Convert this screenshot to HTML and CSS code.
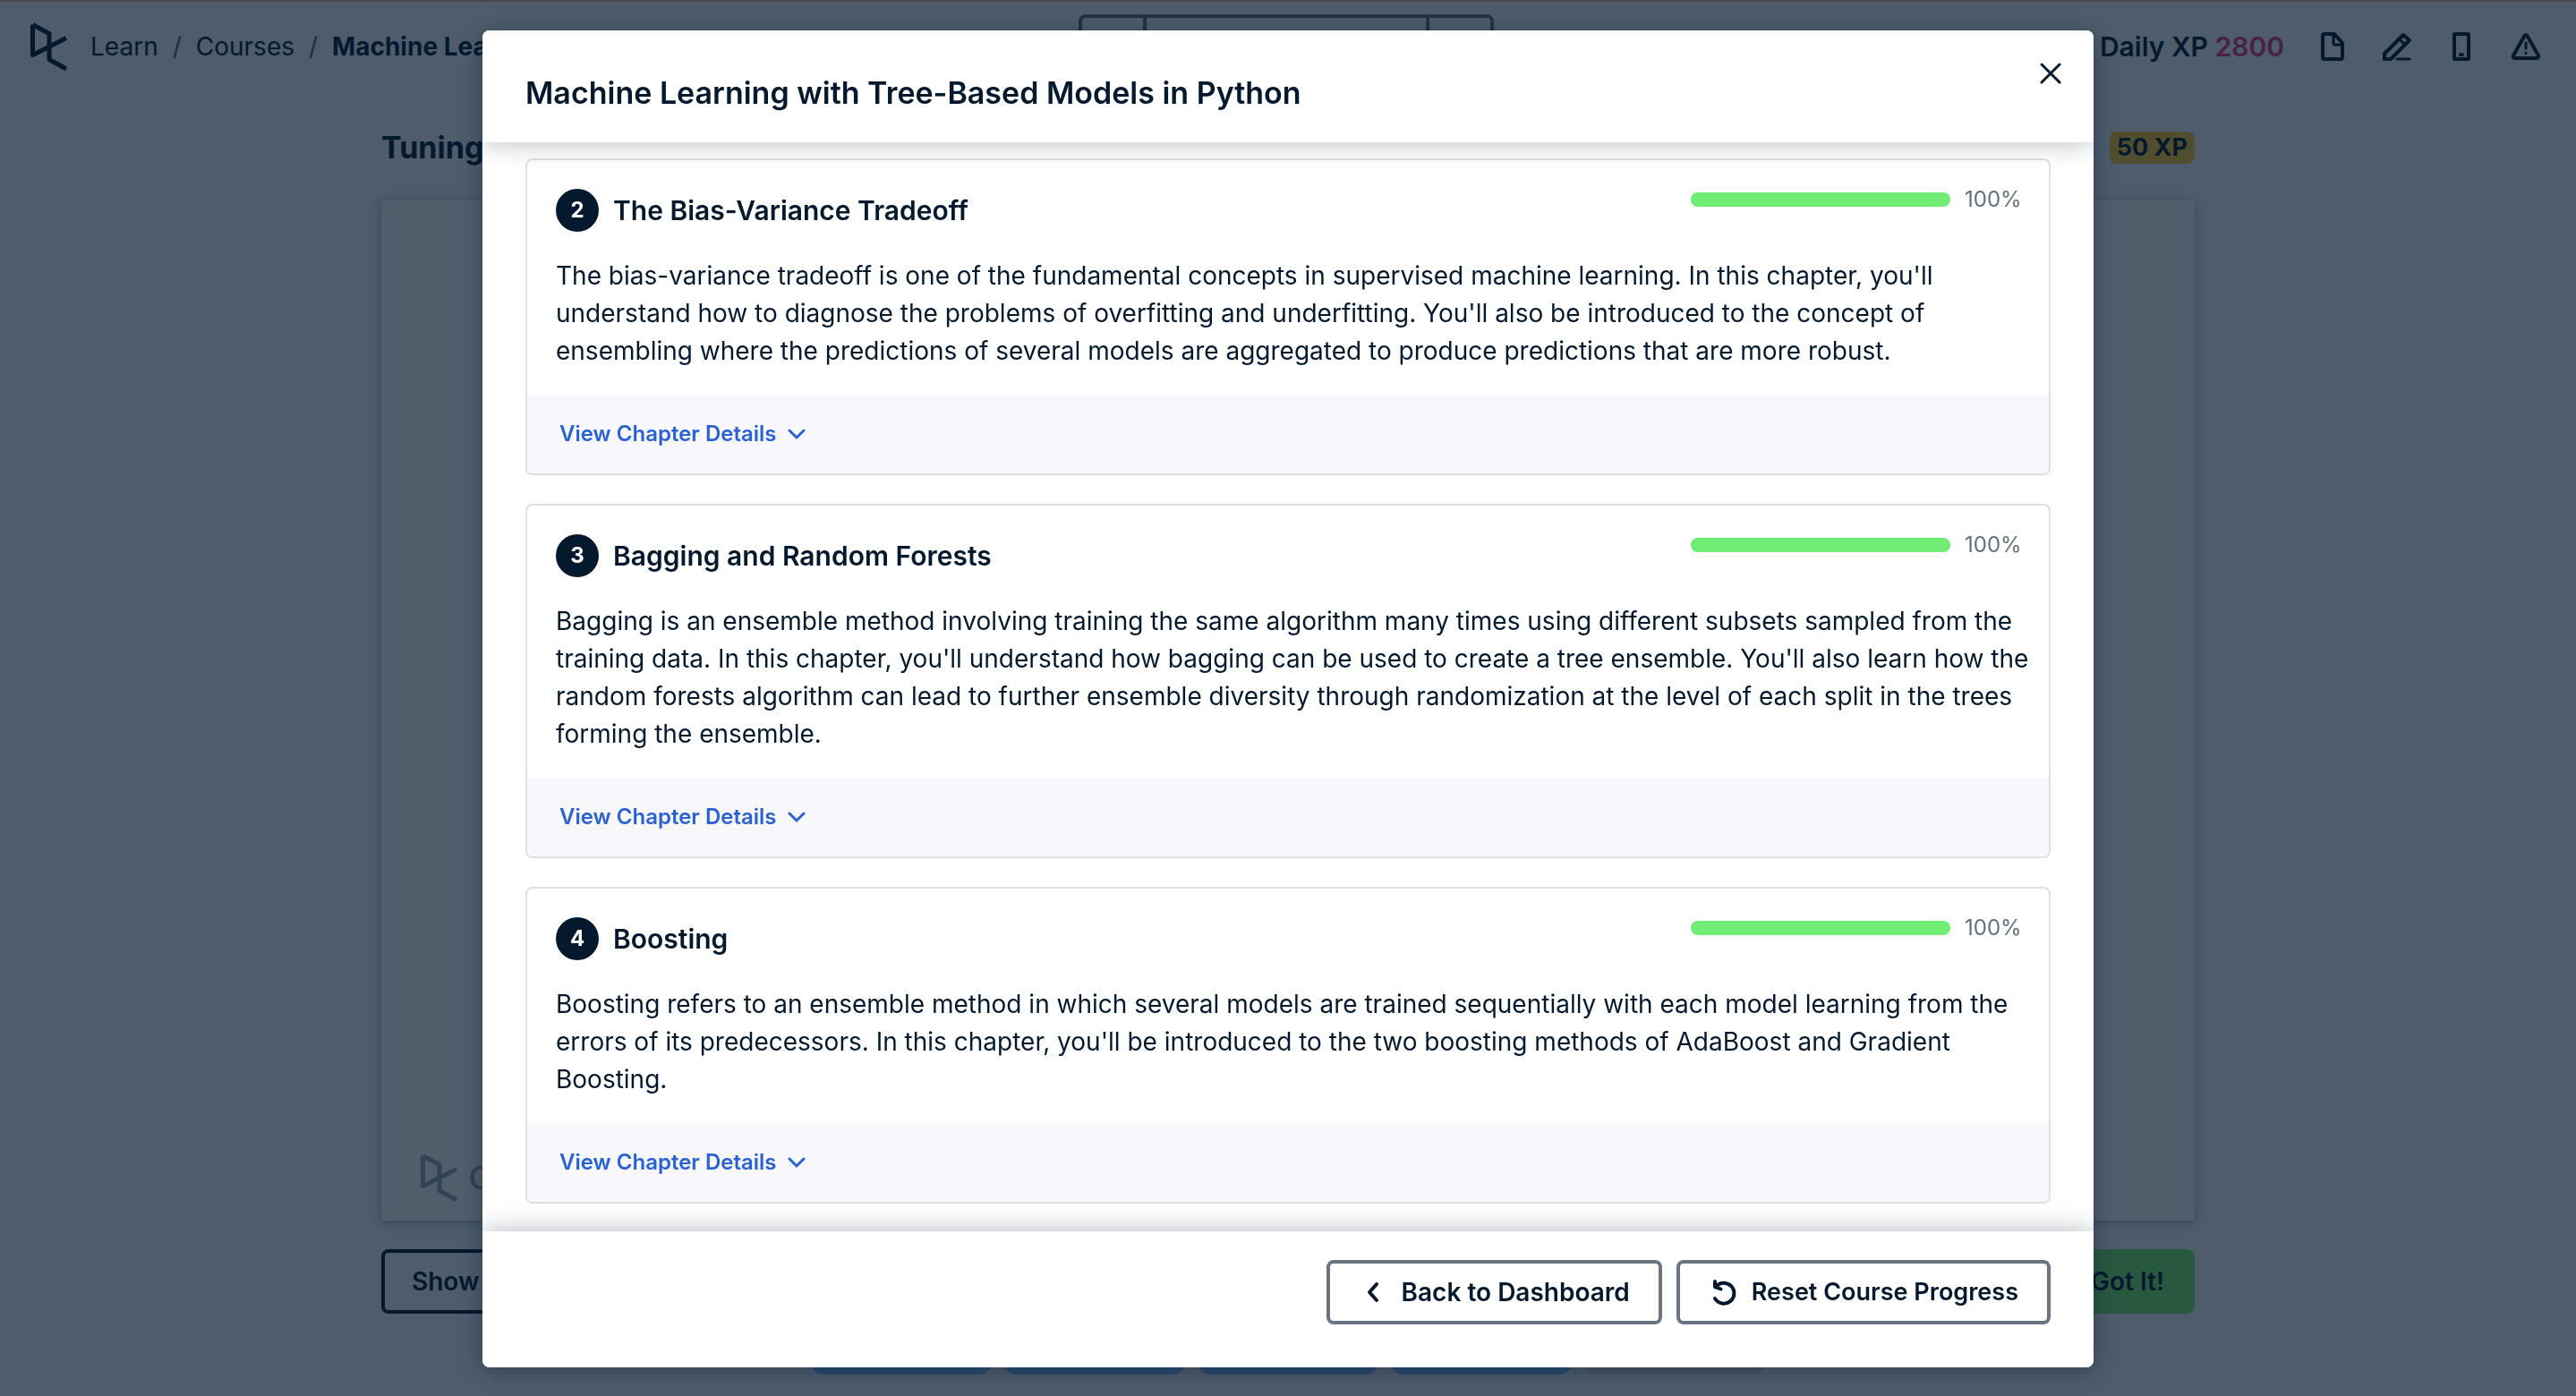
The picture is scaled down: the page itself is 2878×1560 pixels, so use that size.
FILE: index.html
```html
<!DOCTYPE html>
<html lang="en">
<head>
<meta charset="utf-8">
<title>Machine Learning with Tree-Based Models in Python</title>
<link rel="stylesheet" href="styles.css">
</head>
<body>
<svg class="sprite" aria-hidden="true">
  <symbol id="logo" viewBox="0 0 44 56">
    <path d="M3.500 3.500 22 13.500V42.500L41 53M3.500 3.500V37.500L41 18.500" fill="none" stroke="currentColor" stroke-width="5" stroke-linejoin="round"/>
  </symbol>
  <symbol id="chevron" viewBox="0 0 20 12">
    <path d="M2 2 10 10 18 2" fill="none" stroke="currentColor" stroke-width="3" stroke-linecap="round" stroke-linejoin="round"/>
  </symbol>
</svg>
<div class="page">
  <header class="topbar">
    <nav class="breadcrumb" aria-label="Breadcrumb">
      <a href="#" aria-label="Home"><svg class="logo"><use href="#logo"/></svg></a>
      <a href="#">Learn</a>
      <span class="slash">/</span>
      <a href="#">Courses</a>
      <span class="slash">/</span>
      <a href="#" class="current">Machine Learning</a>
    </nav>
    <div class="pager">
      <button type="button" aria-label="Previous"></button>
      <button type="button" class="outline" aria-label="Outline"></button>
      <button type="button" aria-label="Next"></button>
    </div>
    <div class="tools">
      <span class="daily">Daily XP <span class="xp">2800</span></span>
      <a href="#" aria-label="Slides"><svg class="icon" viewBox="0 0 36 36"><path d="M9 4H20L29 14V30Q29 32 27 32H9Q7 32 7 30V6Q7 4 9 4Z"/><path class="thin" d="M19 5V14Q19 16 21 16H28"/></svg></a>
      <a href="#" aria-label="Notes"><svg class="icon" viewBox="0 0 36 36"><path d="M4 32V26L25 5 32 11 11 32Z"/><path class="thin" d="M20 9 27 16M18 32H32"/></svg></a>
      <a href="#" aria-label="Mobile"><svg class="icon" viewBox="0 0 36 36"><rect x="10" y="4" width="16" height="28" rx="1"/><ellipse class="dot" cx="18" cy="27" rx="3" ry="2"/></svg></a>
      <a href="#" aria-label="Report an issue"><svg class="icon" viewBox="0 0 36 36"><path d="M16.500 6Q18 4 19.500 6L32 28Q33 31 30 31H6Q3 31 4 28Z"/><path class="thin" d="M18 14V20M18 25V25.500"/></svg></a>
    </div>
  </header>
  <main class="lesson">
    <div class="lesson-head">
      <h1>Tuning</h1>
      <span class="badge">50 XP</span>
    </div>
    <section class="player">
      <svg class="logo"><use href="#logo"/></svg>
      <span class="wordmark">d</span>
    </section>
    <div class="lesson-actions">
      <button type="button" class="btn btn-show">Show</button>
      <button type="button" class="btn btn-got">Got It!</button>
    </div>
  </main>
  <div class="steps"><i></i><i></i><i></i><i></i><i class="todo"></i></div>
</div>

<div class="overlay">
  <div class="modal" role="dialog" aria-modal="true" aria-labelledby="modal-title">
    <header class="modal-head">
      <h2 id="modal-title">Machine Learning with Tree-Based Models in Python</h2>
      <button type="button" class="close" aria-label="Close"><svg viewBox="0 0 28 28"><path d="M4 4 24 24M24 4 4 24"/></svg></button>
    </header>
    <div class="modal-body">
      <article class="chapter">
        <div class="chapter-main">
          <div class="chapter-head">
            <span class="number">2</span>
            <h3>The Bias-Variance Tradeoff</h3>
            <div class="progress"><div class="track"><div class="fill" style="width:100%"></div></div><span>100%</span></div>
          </div>
          <p>The bias-variance tradeoff is one of the fundamental concepts in supervised machine learning. In this chapter, you'll<br>
          understand how to diagnose the problems of overfitting and underfitting. You'll also be introduced to the concept of<br>
          ensembling where the predictions of several models are aggregated to produce predictions that are more robust.</p>
        </div>
        <div class="chapter-foot"><button type="button">View Chapter Details <svg><use href="#chevron"/></svg></button></div>
      </article>
      <article class="chapter">
        <div class="chapter-main">
          <div class="chapter-head">
            <span class="number">3</span>
            <h3>Bagging and Random Forests</h3>
            <div class="progress"><div class="track"><div class="fill" style="width:100%"></div></div><span>100%</span></div>
          </div>
          <p>Bagging is an ensemble method involving training the same algorithm many times using different subsets sampled from the<br>
          training data. In this chapter, you'll understand how bagging can be used to create a tree ensemble. You'll also learn how the<br>
          random forests algorithm can lead to further ensemble diversity through randomization at the level of each split in the trees<br>
          forming the ensemble.</p>
        </div>
        <div class="chapter-foot"><button type="button">View Chapter Details <svg><use href="#chevron"/></svg></button></div>
      </article>
      <article class="chapter">
        <div class="chapter-main">
          <div class="chapter-head">
            <span class="number">4</span>
            <h3>Boosting</h3>
            <div class="progress"><div class="track"><div class="fill" style="width:100%"></div></div><span>100%</span></div>
          </div>
          <p>Boosting refers to an ensemble method in which several models are trained sequentially with each model learning from the<br>
          errors of its predecessors. In this chapter, you'll be introduced to the two boosting methods of AdaBoost and Gradient<br>
          Boosting.</p>
        </div>
        <div class="chapter-foot"><button type="button">View Chapter Details <svg><use href="#chevron"/></svg></button></div>
      </article>
    </div>
    <footer class="modal-foot">
      <button type="button" class="btn btn-back"><svg viewBox="0 0 32 32"><path d="M20 7 12 16 20 25"/></svg>Back to Dashboard</button>
      <button type="button" class="btn btn-reset"><svg viewBox="0 0 32 32"><path d="M7 23A11.500 11.500 0 1 0 7.500 10.500M7 4V10L13.500 12.500"/></svg>Reset Course Progress</button>
    </footer>
  </div>
</div>
</body>
</html>
```
FILE: styles.css
```css
* { box-sizing: border-box; }
body {
  margin: 0;
  font: 400 28px/42px Inter, "Liberation Sans", sans-serif;
  color: #05192d;
  background: #f7f7fc;
}
a { color: inherit; text-decoration: none; }
button { font: inherit; color: inherit; background: none; border: 0; padding: 0; }
h1, h2, h3, p { margin: 0; }
svg { display: block; flex: none; }
.sprite { display: none; }
.logo { width: 44px; height: 56px; }

.page {
  display: flex;
  flex-direction: column;
  height: 100vh;
  overflow: hidden;
  border-top: 2px solid #e6b48c;
}
.topbar {
  display: grid;
  grid-template-columns: 1fr auto 1fr;
  align-items: center;
  padding: 14px 38px 0 33px;
}
.breadcrumb { display: flex; align-items: center; gap: 16px; white-space: nowrap; }
.breadcrumb a:first-child { margin-right: 8px; }
.slash { color: #4a5867; }
.current { font-weight: 700; }
.pager {
  display: flex;
  height: 72px;
  border: 4px solid #65707d;
  border-radius: 8px;
}
.pager button { width: 68px; }
.pager .outline { width: 320px; border: solid #65707d; border-width: 0 4px; }
.tools { display: flex; align-items: center; justify-content: flex-end; gap: 36px; }
.daily { font-size: 30px; font-weight: 600; white-space: nowrap; }
.xp { color: #e0387a; }
.icon { width: 36px; height: 36px; fill: none; stroke: currentColor; stroke-width: 4; stroke-linejoin: round; }
.icon .thin { stroke-width: 3; stroke-linecap: round; }
.icon .dot { fill: currentColor; stroke: none; }

.lesson {
  flex: 1;
  display: flex;
  flex-direction: column;
  width: 100%;
  max-width: 2026px;
  margin: 0 auto;
}
.lesson-head { display: flex; align-items: center; justify-content: space-between; height: 136px; padding-top: 18px; }
.lesson-head h1 { font-size: 34px; font-weight: 700; }
.badge { padding: 0 8px; line-height: 36px; font-size: 27px; font-weight: 700; border-radius: 8px; background: #ffca30; }
.player {
  flex: 1;
  display: flex;
  align-items: flex-end;
  gap: 10px;
  padding: 0 43px 20px;
  background: #fff;
  box-shadow: 0 2px 12px rgba(5, 25, 45, .3);
  color: #9aa3ad;
}
.wordmark { font-size: 48px; line-height: 64px; }
.lesson-actions { display: flex; justify-content: space-between; padding: 32px 0; }
.steps { display: flex; justify-content: center; gap: 16px; padding-bottom: 24px; }
.steps i { width: 200px; height: 36px; border-radius: 12px; background: #86b8ff; }
.steps .todo { background: #d9dbe4; }

.btn {
  display: flex;
  align-items: center;
  height: 72px;
  border: 4px solid #6a7483;
  border-radius: 8px;
  font-weight: 600;
  white-space: nowrap;
}
.btn-show { padding: 0 30px; border-color: #05192d; }
.btn-got { padding: 0 30px; border-color: #7deb70; background: #7deb70; }

.overlay {
  position: fixed;
  inset: 0;
  padding: 34px 32px;
  overflow: auto;
  background: rgba(5, 25, 45, .7);
}
.modal {
  max-width: 1800px;
  margin: 0 auto;
  overflow: hidden;
  border-radius: 8px;
  background: #fff;
  box-shadow: 0 4px 24px rgba(5, 25, 45, .4);
}
.modal-head, .modal-foot {
  position: relative;
  display: flex;
  background: #fff;
  box-shadow: 0 0 28px rgba(5, 25, 45, .3);
}
.modal-head { justify-content: space-between; height: 125px; padding: 34px 34px 0 48px; }
.modal-head h2 { font-size: 34px; line-height: 72px; font-weight: 600; }
.close { height: 28px; }
.close svg { width: 28px; height: 28px; fill: none; stroke: currentColor; stroke-width: 3; stroke-linecap: round; }
.modal-body { display: flex; flex-direction: column; gap: 32px; padding: 18px 48px 31px; }
.modal-foot { justify-content: flex-end; gap: 16px; padding: 32px 48px 48px; }

.chapter { border: 2px solid #dfdfe8; border-radius: 8px; overflow: hidden; }
.chapter-main { padding: 32px 32px 28px; }
.chapter-head { display: flex; align-items: center; margin-bottom: 28px; }
.number {
  width: 48px;
  margin-right: 16px;
  border-radius: 50%;
  background: #05192d;
  color: #fff;
  font-size: 24px;
  line-height: 48px;
  font-weight: 700;
  text-align: center;
}
.chapter h3 { font-size: 30px; font-weight: 600; }
.progress {
  display: flex;
  align-items: center;
  align-self: flex-start;
  gap: 16px;
  margin-left: auto;
  font-size: 24px;
  line-height: 24px;
  color: #65707d;
}
.progress span { width: 62px; text-align: right; }
.track { width: 290px; height: 16px; border-radius: 8px; background: #e5e5ec; }
.fill { height: 16px; border-radius: 8px; background: #6fed75; }
.chapter p { white-space: nowrap; }
.chapter-foot { padding: 20px 36px; background: #f7f7fc; }
.chapter-foot button { display: flex; align-items: center; gap: 12px; height: 48px; font-size: 24px; font-weight: 600; color: #2a63cf; }
.chapter-foot svg { width: 20px; height: 12px; }
.modal-foot .btn { gap: 16px; padding: 0 32px; }
.modal-foot .btn-reset { font-size: 27px; }
.modal-foot svg { width: 32px; height: 32px; fill: none; stroke: currentColor; stroke-width: 4; stroke-linecap: round; stroke-linejoin: round; }
```
